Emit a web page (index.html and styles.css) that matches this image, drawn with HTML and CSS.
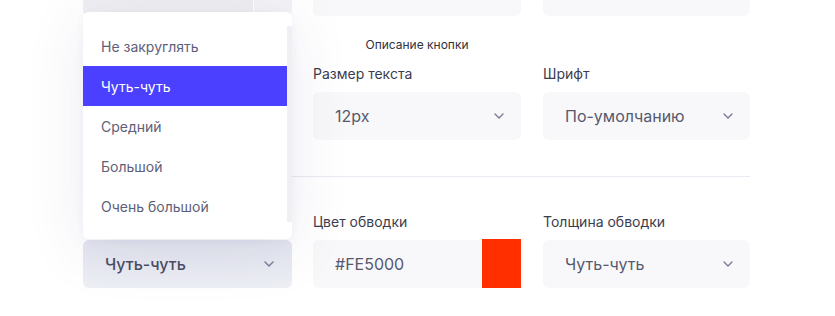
FILE: index.html
```html
<!DOCTYPE html>
<html lang="ru">
<head>
<meta charset="utf-8">
<link rel="stylesheet" href="styles.css">
</head>
<body>
<div class="form">
  <div class="field top-left">
    <div class="top-main"></div>
    <div class="top-swatch"></div>
  </div>
  <div class="field"></div>
  <div class="field"></div>

  <div class="caption-row">
    <div></div>
    <span class="caption">Описание кнопки</span>
    <div></div>
  </div>

  <div class="label-cell"></div>
  <div class="label">Размер текста</div>
  <div class="label">Шрифт</div>

  <div class="empty-cell"></div>
  <div class="select">
    <span class="value">12px</span>
    <svg class="chev" width="10" height="6" viewBox="0 0 10 6"><polyline points="1,1 5,5 9,1"/></svg>
  </div>
  <div class="select">
    <span class="value">По-умолчанию</span>
    <svg class="chev" width="10" height="6" viewBox="0 0 10 6"><polyline points="1,1 5,5 9,1"/></svg>
  </div>

  <div class="divider"></div>

  <div class="label-cell"></div>
  <div class="label">Цвет обводки</div>
  <div class="label">Толщина обводки</div>

  <div class="select-wrap">
    <div class="dropdown">
      <div class="list">
        <div class="items">
          <div class="item">Не закруглять</div>
          <div class="item active">Чуть-чуть</div>
          <div class="item">Средний</div>
          <div class="item">Большой</div>
          <div class="item">Очень большой</div>
        </div>
        <div class="track"></div>
      </div>
    </div>
    <div class="select open">
      <span class="value strong">Чуть-чуть</span>
      <svg class="chev" width="10" height="6" viewBox="0 0 10 6"><polyline points="1,1 5,5 9,1"/></svg>
    </div>
  </div>
  <div class="color-input">
    <span class="value">#FE5000</span>
    <div class="swatch"></div>
  </div>
  <div class="select">
    <span class="value">Чуть-чуть</span>
    <svg class="chev" width="10" height="6" viewBox="0 0 10 6"><polyline points="1,1 5,5 9,1"/></svg>
  </div>
</div>
</body>
</html>
```
FILE: styles.css
```css
html, body {
  margin: 0;
  padding: 0;
  background: #ffffff;
  overflow: hidden;
}
body {
  width: 835px;
  height: 316px;
  font-family: Inter, "Noto Sans", sans-serif;
}
.form {
  display: grid;
  grid-template-columns: 208px 208px 207px;
  column-gap: 22px;
  padding-left: 83px;
  margin-top: -32px;
}
.field {
  height: 48px;
  background: #f8f8fa;
  border-radius: 6px;
}
.top-left {
  display: flex;
  overflow: hidden;
  background: transparent;
  margin-right: -1px;
}
.top-main {
  flex: 1;
  background: #efeff2;
}
.top-swatch {
  width: 38px;
  margin-left: 1px;
  background: #f3f3f6;
}
.caption-row {
  grid-column: 1 / 4;
  display: grid;
  grid-template-columns: 208px 208px 207px;
  column-gap: 22px;
  margin-top: 21px;
  margin-bottom: 12px;
  height: 16px;
}
.caption {
  text-align: center;
  font-size: 12px;
  line-height: 16px;
  color: #2f3140;
}
.label, .label-cell {
  font-size: 14px;
  line-height: 18px;
  height: 18px;
  color: #3b3d4f;
  margin-bottom: 9px;
}
.select, .color-input {
  height: 48px;
  box-sizing: border-box;
  background: #f8f8fa;
  border-radius: 6px;
  display: flex;
  align-items: center;
  justify-content: space-between;
  padding-left: 22px;
  padding-right: 17px;
}
.value {
  font-size: 16px;
  color: #56596e;
}
.value.strong {
  color: #4a4d63;
  font-weight: 500;
}
.chev polyline {
  fill: none;
  stroke: #7a7c95;
  stroke-width: 1.4;
  stroke-linecap: round;
  stroke-linejoin: round;
}
.divider {
  grid-column: 1 / 4;
  height: 1px;
  background: #e9ebf2;
  margin-top: 36px;
  margin-bottom: 36px;
}
.color-input {
  padding-right: 0;
  border-radius: 6px 0 0 6px;
  align-items: stretch;
}
.color-input .value {
  align-self: center;
}
.swatch {
  width: 39px;
  margin-top: -1px;
  background: #ff2f00;
}
.select-wrap {
  position: relative;
  margin-right: -1px;
}
.select.open {
  background: linear-gradient(180deg, #e3e6ef 0%, #edeff5 100%);
  padding-right: 18px;
}
.dropdown {
  position: absolute;
  left: 0;
  bottom: calc(100% + 1px);
  width: 209px;
  height: 227px;
  box-sizing: border-box;
  background: #ffffff;
  border-radius: 6px;
  padding-top: 14px;
  box-shadow: 0 10px 60px rgba(70, 50, 120, 0.10), 0 2px 10px rgba(70, 50, 120, 0.04);
  z-index: 2;
}
.list {
  display: flex;
}
.items {
  width: 204px;
}
.track {
  width: 5px;
  height: 196px;
  background: #eff0f3;
}
.item {
  height: 40px;
  box-sizing: border-box;
  padding-top: 1px;
  line-height: 39px;
  padding-left: 18px;
  font-size: 14px;
  color: #5e6078;
}
.item.active {
  background: #4b40ff;
  color: #ffffff;
}
```
